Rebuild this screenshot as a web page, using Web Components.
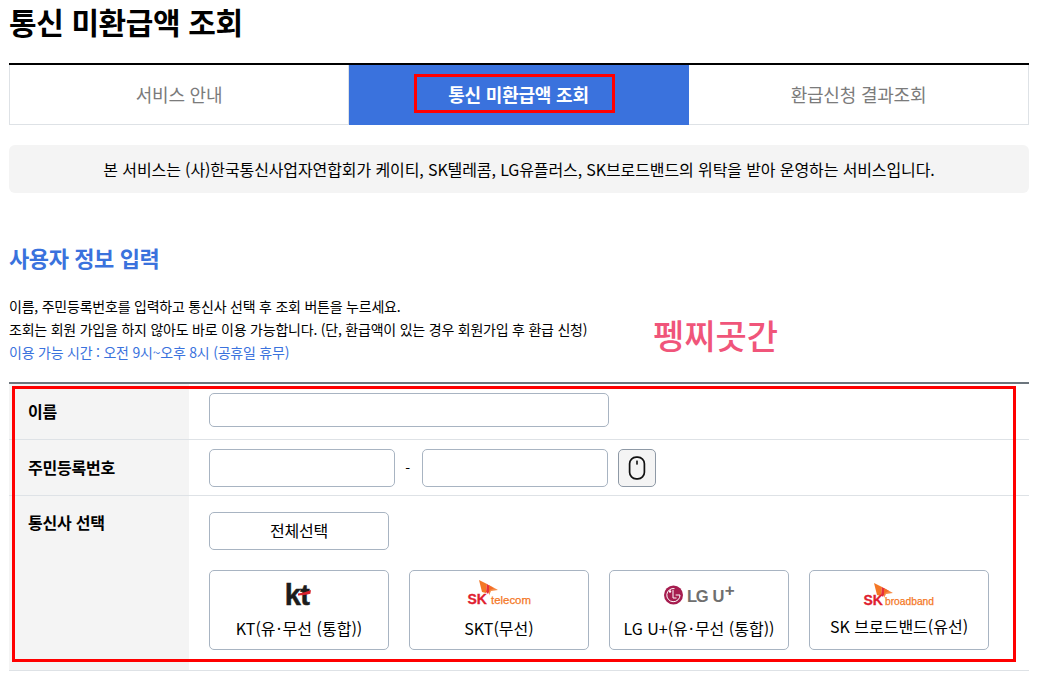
<!DOCTYPE html>
<html lang="ko">
<head>
<meta charset="utf-8">
<title>통신 미환급액 조회</title>
<style>
    html, body { margin: 0; padding: 0; background: #fff; overflow: hidden; }
    body { font-family: "Noto Sans CJK KR", "Noto Sans", sans-serif; color: #000; }
</style>
</head>
<body>
<refund-page></refund-page>

<script>
const FONT = '"Noto Sans CJK KR", "Noto Sans", sans-serif';

class TabItem extends HTMLElement {
    constructor() {
        super();
        this.attachShadow({ mode: 'open' });
        this.shadowRoot.innerHTML = `
            <style>
                :host {
                    flex: 0 0 340px;
                    display: flex;
                    align-items: center;
                    justify-content: center;
                    font-size: 18px;
                    color: #7b7b7b;
                    border-bottom: 1px solid #dee2e6;
                    border-right: 1px solid #dee2e6;
                    box-sizing: border-box;
                    padding-bottom: 2px;
                    position: relative;
                }
                :host(:first-child) { border-left: 1px solid #dee2e6; }
                :host([active]) {
                    background: #3a72dd;
                    border-color: #3a72dd;
                    color: #fff;
                    font-weight: 700;
                }
                .mark {
                    position: absolute;
                    left: 65px; top: 9px;
                    width: 201px; height: 39px;
                    box-sizing: border-box;
                    border: 3px solid #f00;
                }
            </style>
            <slot></slot>
            ${this.hasAttribute('active') ? '<div class="mark"></div>' : ''}
        `;
    }
}

class TabBar extends HTMLElement {
    constructor() {
        super();
        this.attachShadow({ mode: 'open' });
        this.shadowRoot.innerHTML = `
            <style>
                :host {
                    display: flex;
                    height: 62px;
                    box-sizing: border-box;
                    border-top: 2px solid #000;
                }
            </style>
            <slot></slot>
        `;
    }
}

class FormRow extends HTMLElement {
    constructor() {
        super();
        this.attachShadow({ mode: 'open' });
        this.shadowRoot.innerHTML = `
            <style>
                :host {
                    display: grid;
                    grid-template-columns: 180px 1fr;
                    border-bottom: 1px solid #dee2e6;
                }
                .label {
                    background: #f4f4f4;
                    padding: var(--label-top, 0) 0 2px 19px;
                    font-size: 16px;
                    font-weight: 700;
                    display: flex;
                    align-items: var(--label-align, center);
                }
                .field {
                    padding: var(--field-pad, 9px 20px 0);
                    height: var(--field-height, 46px);
                }
            </style>
            <div class="label">${this.getAttribute('label')}</div>
            <div class="field"><slot></slot></div>
        `;
    }
}

class TextBox extends HTMLElement {
    constructor() {
        super();
        this.attachShadow({ mode: 'open' });
        this.shadowRoot.innerHTML = `
            <style>
                :host { display: block; }
                input {
                    display: block;
                    width: 100%;
                    height: 100%;
                    box-sizing: border-box;
                    border: 1px solid #a8b4c2;
                    border-radius: 5px;
                    background: #fff;
                    padding: 0 10px;
                    outline: none;
                }
            </style>
            <input type="text">
        `;
    }
}

class MouseButton extends HTMLElement {
    constructor() {
        super();
        this.attachShadow({ mode: 'open' });
        this.shadowRoot.innerHTML = `
            <style>
                :host {
                    display: flex;
                    align-items: center;
                    justify-content: center;
                    width: 38px;
                    height: 38px;
                    box-sizing: border-box;
                    border: 1px solid #8e99a6;
                    border-radius: 5px;
                    background: #f4f4f4;
                }
                svg { display: block; }
            </style>
            <svg width="18" height="24" viewBox="0 0 18 24">
                <rect x="1.6" y="1.2" width="14.8" height="21.6" rx="6.6" fill="none" stroke="#111" stroke-width="1.7"/>
                <rect x="8.2" y="4.6" width="1.6" height="4" fill="#111"/>
            </svg>
        `;
    }
}

class SelectAll extends HTMLElement {
    constructor() {
        super();
        this.attachShadow({ mode: 'open' });
        this.shadowRoot.innerHTML = `
            <style>
                :host {
                    display: flex;
                    align-items: center;
                    justify-content: center;
                    width: 180px;
                    height: 38px;
                    box-sizing: border-box;
                    border: 1px solid #a8b4c2;
                    border-radius: 5px;
                    padding-bottom: 2px;
                    font-size: 16px;
                    background: #fff;
                }
            </style>
            <slot></slot>
        `;
    }
}

class CarrierCard extends HTMLElement {
    constructor() {
        super();
        this.attachShadow({ mode: 'open' });
        this.shadowRoot.innerHTML = `
            <style>
                :host {
                    display: flex;
                    flex-direction: column;
                    align-items: center;
                    width: 180px;
                    height: 80px;
                    box-sizing: border-box;
                    border: 1px solid #a8b4c2;
                    border-radius: 5px;
                    background: #fff;
                    font-size: 16px;
                    line-height: 22px;
                    letter-spacing: 0;
                }
                .logo { height: 36px; display: flex; align-items: flex-end; }
                .logo ::slotted(svg) { display: block; overflow: visible; }
                .name { margin-top: 10px; white-space: nowrap; }
                :host([raised]) .name { margin-top: 8px; }
            </style>
            <div class="logo"><slot name="logo"></slot></div>
            <div class="name"><slot></slot></div>
        `;
    }
}

class RefundPage extends HTMLElement {
    constructor() {
        super();
        this.attachShadow({ mode: 'open' });
        this.shadowRoot.innerHTML = `
            <style>
                :host {
                    display: block;
                    position: relative;
                    width: 1020px;
                    margin-left: 9px;
                    font-family: ${FONT};
                    color: #000;
                    letter-spacing: -0.2px;
                }
                h1 {
                    margin: 0;
                    height: 63px;
                    font-size: 30px;
                    line-height: 42px;
                    font-weight: 700;
                    letter-spacing: -0.4px;
                }
                .notice {
                    margin-top: 20px;
                    height: 48px;
                    background: #f4f4f4;
                    border-radius: 6px;
                    display: flex;
                    align-items: center;
                    justify-content: center;
                    font-size: 16px;
                    letter-spacing: -0.11px;
                }
                h2 {
                    margin: 0;
                    padding-top: 46px;
                    height: 37px;
                    font-size: 22px;
                    line-height: 37px;
                    font-weight: 700;
                    color: #3a72dd;
                    letter-spacing: -0.4px;
                }
                .guide {
                    margin: 19px 0 0;
                    font-size: 14px;
                    line-height: 23px;
                    height: 87px;
                    letter-spacing: -0.22px;
                }
                .guide p { margin: 0; }
                .guide .blue { color: #3a72dd; }
                .watermark {
                    position: absolute;
                    left: 644px; top: 312px;
                    font-size: 34px;
                    line-height: 46px;
                    font-weight: 500;
                    color: #f0557a;
                    letter-spacing: 0;
                }
                .form { border-top: 2px solid #6c757d; }
                .id-row {
                    display: grid;
                    grid-template-columns: 186px 27px 186px 38px;
                    align-items: center;
                    height: 38px;
                }
                .id-row text-box { height: 38px; }
                .dash { text-align: center; font-size: 14px; position: relative; left: -1px; }
                .id-row mouse-button { margin-left: 10px; }
                .name-box { width: 400px; height: 34px; }
                .carrier {
                    --label-align: flex-start;
                    --label-top: 14px;
                    --field-pad: 16px 20px 0;
                    --field-height: 158px;
                }
                .cards {
                    display: grid;
                    grid-template-columns: repeat(4, 180px);
                    column-gap: 20px;
                    margin-top: 20px;
                }
                .dot { margin: 0 1.3px; }
                .red-box {
                    position: absolute;
                    left: 3px; top: 386px;
                    width: 1004px; height: 276px;
                    box-sizing: border-box;
                    border: 3px solid #f00;
                    pointer-events: none;
                }
            </style>

            <h1>통신 미환급액 조회</h1>

            <tab-bar>
                <tab-item>서비스 안내</tab-item>
                <tab-item active>통신 미환급액 조회</tab-item>
                <tab-item>환급신청 결과조회</tab-item>
            </tab-bar>

            <div class="notice">본 서비스는 (사)한국통신사업자연합회가 케이티, SK텔레콤, LG유플러스, SK브로드밴드의 위탁을 받아 운영하는 서비스입니다.</div>

            <h2>사용자 정보 입력</h2>

            <div class="guide">
                <p>이름, 주민등록번호를 입력하고 통신사 선택 후 조회 버튼을 누르세요.</p>
                <p>조회는 회원 가입을 하지 않아도 바로 이용 가능합니다. (단, 환급액이 있는 경우 회원가입 후 환급 신청)</p>
                <p class="blue">이용 가능 시간 : 오전 9시~오후 8시 (공휴일 휴무)</p>
            </div>

            <div class="watermark">펭찌곳간</div>

            <div class="form">
                <form-row label="이름"><text-box class="name-box"></text-box></form-row>
                <form-row label="주민등록번호">
                    <div class="id-row">
                        <text-box></text-box>
                        <span class="dash">-</span>
                        <text-box></text-box>
                        <mouse-button></mouse-button>
                    </div>
                </form-row>
                <form-row label="통신사 선택" class="carrier">
                    <select-all>전체선택</select-all>
                    <div class="cards">
                        <carrier-card>
                            <svg slot="logo" width="60" height="34" viewBox="0 0 60 34">
                                <text x="28" y="31.5" text-anchor="middle" font-family="Liberation Sans, sans-serif" font-weight="700" font-size="29" letter-spacing="-0.6" stroke="#1c1c1c" stroke-width=".5" fill="#1c1c1c">kt</text>
                                <path d="M29 20.5 C33 20 38 19 42 17 L41.4 20.8 C37 22 33 22.4 29 22.6 Z" fill="#d8202c"/>
                            </svg>
                            <span>KT(유<span class="dot">·</span>무선 (통합))</span>
                        </carrier-card>
                        <carrier-card>
                            <svg slot="logo" width="66" height="28" viewBox="0 0 66 28">
                                <path d="M13 1 L21 5 L20 14 L16 13 Z" fill="#f47725"/>
                                <path d="M21 5 L28 9.5 L24 11 L22 15 L20 13 Z" fill="#e8303a"/>
                                <path d="M23 6 L32 11 L25 12 L23 16.5 Z" fill="#f47725" opacity=".85"/>
                                <text x="1.5" y="24.5" font-family="Liberation Sans, sans-serif" font-weight="700" font-size="14" stroke="#e0202f" stroke-width=".3" fill="#e0202f">SK</text>
                                <text x="25" y="25" font-family="Liberation Sans, sans-serif" font-size="11.5" textLength="40" lengthAdjust="spacingAndGlyphs" stroke="#f47725" stroke-width=".25" fill="#f47725">telecom</text>
                            </svg>
                            SKT(무선)
                        </carrier-card>
                        <carrier-card>
                            <svg slot="logo" width="74" height="26" viewBox="0 0 74 26">
                                <circle cx="11.5" cy="14" r="9.5" fill="#a61d4f"/>
                                <circle cx="8" cy="10.5" r="1.2" fill="#fff"/>
                                <path d="M12.5 7.6 A6.6 6.6 0 1 0 18 14 L13.6 14" fill="none" stroke="#fff" stroke-width="1"/>
                                <path d="M11 9 V17 H14.5" fill="none" stroke="#fff" stroke-width="1"/>
                                <text x="25" y="21" font-family="Liberation Sans, sans-serif" font-weight="700" font-size="16.5" letter-spacing="-1.3" word-spacing="2" fill="#6f6f6f">LG U<tspan dx="1.5" dy="-6" font-size="17" letter-spacing="0">+</tspan></text>
                            </svg>
                            <span>LG U+(유<span class="dot">·</span>무선 (통합))</span>
                        </carrier-card>
                        <carrier-card raised>
                            <svg slot="logo" width="72" height="26" viewBox="0 0 72 26">
                                <path d="M11 2 L19 6 L18 15 L14 14 Z" fill="#f47725"/>
                                <path d="M19 6 L26 10 L22 12 L20 16 L18 14 Z" fill="#e8303a"/>
                                <path d="M21 7 L30 12 L23 13 L21 17 Z" fill="#f47725" opacity=".85"/>
                                <text x="0.5" y="24" font-family="Liberation Sans, sans-serif" font-weight="700" font-size="14" stroke="#e0202f" stroke-width=".3" fill="#e0202f">SK</text>
                                <text x="22" y="24" font-family="Liberation Sans, sans-serif" font-size="11" textLength="49" lengthAdjust="spacingAndGlyphs" stroke="#f47725" stroke-width=".25" fill="#f47725">broadband</text>
                            </svg>
                            SK 브로드밴드(유선)
                        </carrier-card>
                    </div>
                </form-row>
            </div>

            <div class="red-box"></div>
        `;
    }
}

customElements.define('tab-item', TabItem);
customElements.define('tab-bar', TabBar);
customElements.define('form-row', FormRow);
customElements.define('text-box', TextBox);
customElements.define('mouse-button', MouseButton);
customElements.define('select-all', SelectAll);
customElements.define('carrier-card', CarrierCard);
customElements.define('refund-page', RefundPage);
</script>
</body>
</html>
